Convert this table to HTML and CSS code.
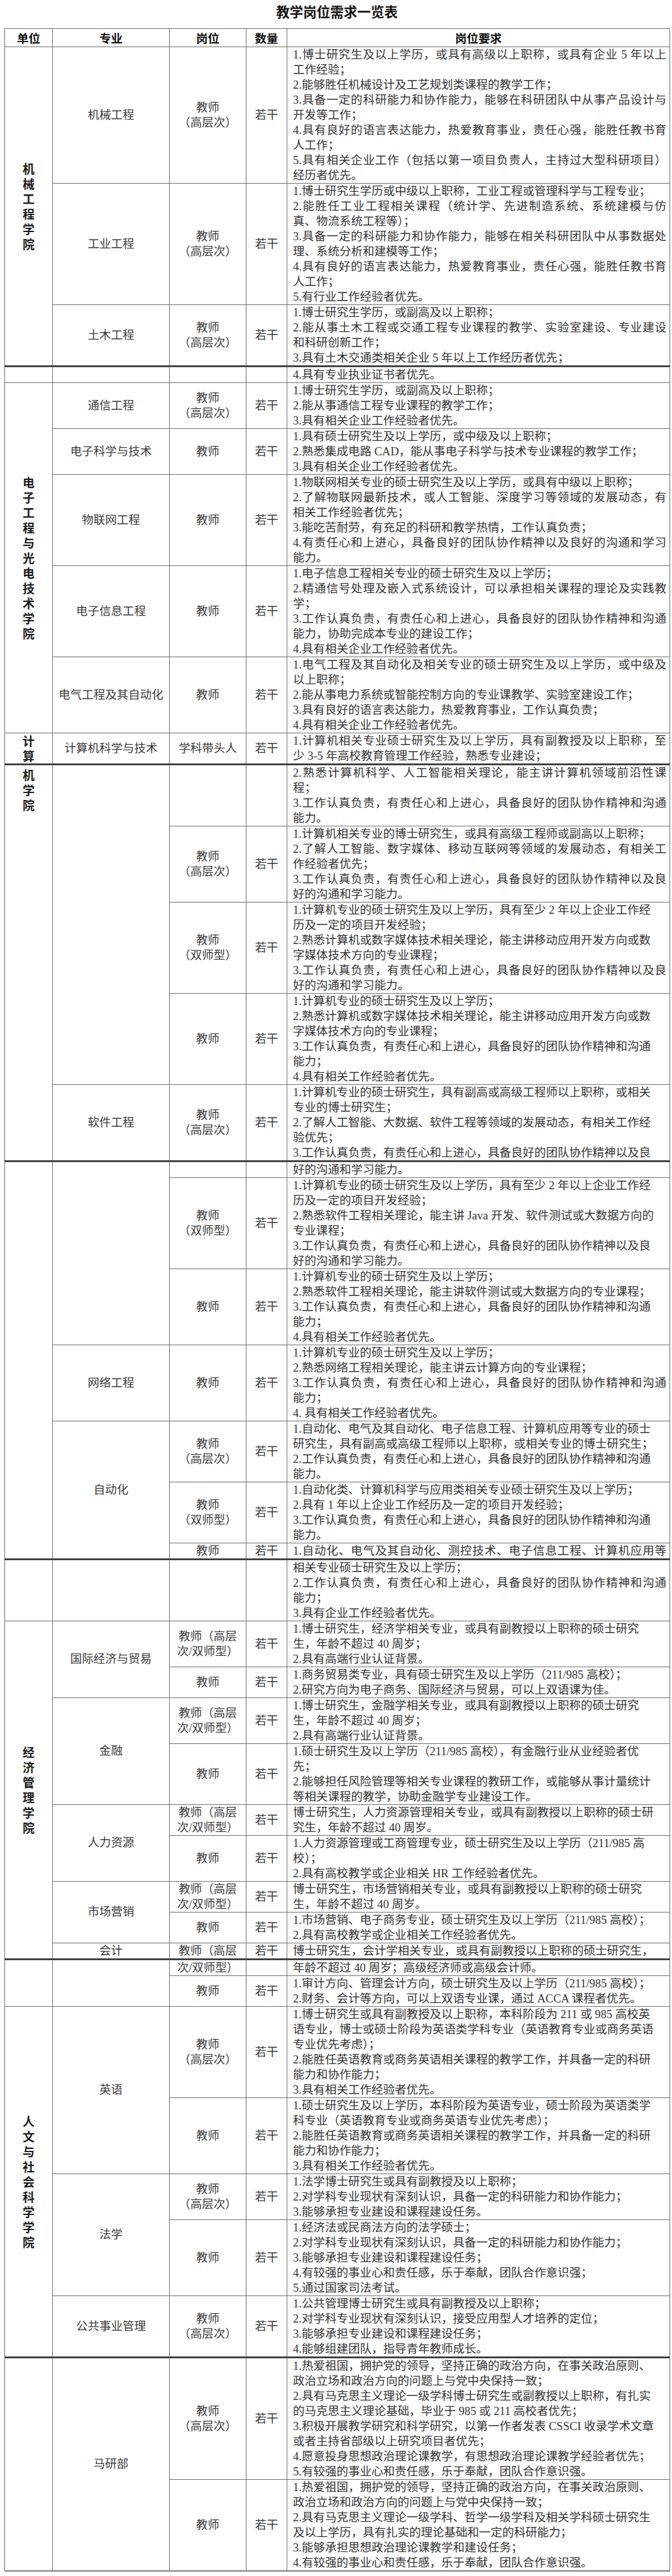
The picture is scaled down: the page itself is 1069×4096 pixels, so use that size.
FILE: index.html
```html
<!DOCTYPE html>
<html lang="zh-CN">
<head>
<meta charset="utf-8">
<title>教学岗位需求一览表</title>
<link rel="stylesheet" href="styles.css">
</head>
<body>
<div class="doc">
<div class="title">教学岗位需求一览表</div>

<table class="seg brk">
<colgroup><col class="c1"><col class="c2"><col class="c3"><col class="c4"><col class="c5"></colgroup>
<tr class="hd"><th>单位</th><th>专业</th><th>岗位</th><th>数量</th><th>岗位要求</th></tr>
<tr>
<td class="u" rowspan="3"><span class="vt">机械工程学院</span></td>
<td class="m">机械工程</td><td class="p">教师<br>（高层次）</td><td class="n">若干</td>
<td class="r"><div class="j">1.博士研究生及以上学历，或具有高级以上职称，或具有企业 5 年以上</div><div>工作经验；</div><div>2.能够胜任机械设计及工艺规划类课程的教学工作；</div><div class="j">3.具备一定的科研能力和协作能力，能够在科研团队中从事产品设计与</div><div>开发等工作；</div><div class="j">4.具有良好的语言表达能力，热爱教育事业，责任心强，能胜任教书育</div><div>人工作；</div><div class="j">5.具有相关企业工作（包括以第一项目负责人，主持过大型科研项目）</div><div>经历者优先。</div></td>
</tr>
<tr>
<td class="m">工业工程</td><td class="p">教师<br>（高层次）</td><td class="n">若干</td>
<td class="r"><div>1.博士研究生学历或中级以上职称，工业工程或管理科学与工程专业；</div><div class="j">2.能胜任工业工程相关课程（统计学、先进制造系统、系统建模与仿</div><div>真、物流系统工程等）；</div><div class="j">3.具备一定的科研能力和协作能力，能够在相关科研团队中从事数据处</div><div>理、系统分析和建模等工作；</div><div class="j">4.具有良好的语言表达能力，热爱教育事业，责任心强，能胜任教书育</div><div>人工作；</div><div>5.有行业工作经验者优先。</div></td>
</tr>
<tr>
<td class="m">土木工程</td><td class="p">教师<br>（高层次）</td><td class="n">若干</td>
<td class="r"><div>1.博士研究生学历，或副高及以上职称；</div><div class="j">2.能从事土木工程或交通工程专业课程的教学、实验室建设、专业建设</div><div>和科研创新工作；</div><div>3.具有土木交通类相关企业 5 年以上工作经历者优先；</div></td>
</tr>
</table>

<table class="seg brk">
<colgroup><col class="c1"><col class="c2"><col class="c3"><col class="c4"><col class="c5"></colgroup>
<tr><td class="u"></td><td class="m"></td><td class="p"></td><td class="n"></td><td class="r"><div>4.具有专业执业证书者优先。</div></td></tr>
<tr>
<td class="u" rowspan="5"><span class="vt">电子工程与光电技术学院</span></td>
<td class="m">通信工程</td><td class="p">教师<br>（高层次）</td><td class="n">若干</td>
<td class="r"><div>1.博士研究生学历，或副高及以上职称；</div><div>2.能从事通信工程专业课程的教学工作；</div><div>3.具有相关企业工作经验者优先。</div></td>
</tr>
<tr>
<td class="m">电子科学与技术</td><td class="p">教师</td><td class="n">若干</td>
<td class="r"><div>1.具有硕士研究生及以上学历，或中级及以上职称；</div><div>2.熟悉集成电路 CAD，能从事电子科学与技术专业课程的教学工作；</div><div>3.具有相关企业工作经验者优先。</div></td>
</tr>
<tr>
<td class="m">物联网工程</td><td class="p">教师</td><td class="n">若干</td>
<td class="r"><div>1.物联网相关专业的硕士研究生及以上学历，或具有中级以上职称；</div><div class="j">2.了解物联网最新技术，或人工智能、深度学习等领域的发展动态，有</div><div>相关工作经验者优先；</div><div>3.能吃苦耐劳，有充足的科研和教学热情，工作认真负责；</div><div class="j">4.有责任心和上进心，具备良好的团队协作精神以及良好的沟通和学习</div><div>能力。</div></td>
</tr>
<tr>
<td class="m">电子信息工程</td><td class="p">教师</td><td class="n">若干</td>
<td class="r"><div>1.电子信息工程相关专业的硕士研究生及以上学历；</div><div class="j">2.精通信号处理及嵌入式系统设计，可以承担相关课程的理论及实践教</div><div>学；</div><div class="j">3.工作认真负责，有责任心和上进心，具备良好的团队协作精神和沟通</div><div>能力，协助完成本专业的建设工作；</div><div>4.具有相关企业工作经验者优先。</div></td>
</tr>
<tr>
<td class="m">电气工程及其自动化</td><td class="p">教师</td><td class="n">若干</td>
<td class="r"><div class="j">1.电气工程及其自动化及相关专业的硕士研究生及以上学历，或中级及</div><div>以上职称；</div><div>2.能从事电力系统或智能控制方向的专业课教学、实验室建设工作；</div><div>3.具有良好的语言表达能力，热爱教育事业，工作认真负责；</div><div>4.具有相关企业工作经验者优先。</div></td>
</tr>
<tr>
<td class="u"><span class="vt">计算</span></td>
<td class="m">计算机科学与技术</td><td class="p">学科带头人</td><td class="n">若干</td>
<td class="r"><div class="j">1.计算机相关专业硕士研究生及以上学历，具有副教授及以上职称，至</div><div>少 3-5 年高校教育管理工作经验，熟悉专业建设；</div></td>
</tr>
</table>

<table class="seg brk">
<colgroup><col class="c1"><col class="c2"><col class="c3"><col class="c4"><col class="c5"></colgroup>
<tr>
<td class="u top" rowspan="5"><span class="vt">机学院</span></td>
<td class="m" rowspan="4"></td><td class="p"></td><td class="n"></td>
<td class="r"><div class="j">2.熟悉计算机科学、人工智能相关理论，能主讲计算机领域前沿性课</div><div>程；</div><div class="j">3.工作认真负责，有责任心和上进心，具备良好的团队协作精神和沟通</div><div>能力。</div></td>
</tr>
<tr>
<td class="p">教师<br>（高层次）</td><td class="n">若干</td>
<td class="r"><div>1.计算机相关专业的博士研究生，或具有高级工程师或副高以上职称；</div><div class="j">2.了解人工智能、数字媒体、移动互联网等领域的发展动态，有相关工</div><div>作经验者优先；</div><div class="j">3.工作认真负责，有责任心和上进心，具备良好的团队协作精神以及良</div><div>好的沟通和学习能力。</div></td>
</tr>
<tr>
<td class="p">教师<br>（双师型）</td><td class="n">若干</td>
<td class="r"><div>1.计算机专业的硕士研究生及以上学历，具有至少 2 年以上企业工作经</div><div>历及一定的项目开发经验；</div><div>2.熟悉计算机或数字媒体技术相关理论，能主讲移动应用开发方向或数</div><div>字媒体技术方向的专业课程；</div><div class="j">3.工作认真负责，有责任心和上进心，具备良好的团队协作精神以及良</div><div>好的沟通和学习能力。</div></td>
</tr>
<tr>
<td class="p">教师</td><td class="n">若干</td>
<td class="r"><div>1.计算机专业的硕士研究生及以上学历；</div><div>2.熟悉计算机或数字媒体技术相关理论，能主讲移动应用开发方向或数</div><div>字媒体技术方向的专业课程；</div><div>3.工作认真负责，有责任心和上进心，具备良好的团队协作精神和沟通</div><div>能力；</div><div>4.具有相关工作经验者优先。</div></td>
</tr>
<tr>
<td class="m">软件工程</td><td class="p">教师<br>（高层次）</td><td class="n">若干</td>
<td class="r"><div>1.计算机专业的硕士研究生，具有副高或高级工程师以上职称，或相关</div><div>专业的博士研究生；</div><div>2.了解人工智能、大数据、软件工程等领域的发展动态，有相关工作经</div><div>验优先；</div><div>3.工作认真负责，有责任心和上进心，具备良好的团队协作精神以及良</div></td>
</tr>
</table>

<table class="seg brk">
<colgroup><col class="c1"><col class="c2"><col class="c3"><col class="c4"><col class="c5"></colgroup>
<tr>
<td class="u" rowspan="7"></td>
<td class="m" rowspan="3"></td><td class="p"></td><td class="n"></td>
<td class="r"><div>好的沟通和学习能力。</div></td>
</tr>
<tr>
<td class="p">教师<br>（双师型）</td><td class="n">若干</td>
<td class="r"><div>1.计算机专业的硕士研究生及以上学历，具有至少 2 年以上企业工作经</div><div>历及一定的项目开发经验；</div><div>2.熟悉软件工程相关理论，能主讲 Java 开发、软件测试或大数据方向的</div><div>专业课程；</div><div>3.工作认真负责，有责任心和上进心，具备良好的团队协作精神以及良</div><div>好的沟通和学习能力。</div></td>
</tr>
<tr>
<td class="p">教师</td><td class="n">若干</td>
<td class="r"><div>1.计算机专业的硕士研究生及以上学历；</div><div>2.熟悉软件工程相关理论，能主讲软件测试或大数据方向的专业课程；</div><div>3.工作认真负责，有责任心和上进心，具备良好的团队协作精神和沟通</div><div>能力；</div><div>4.具有相关工作经验者优先。</div></td>
</tr>
<tr>
<td class="m">网络工程</td><td class="p">教师</td><td class="n">若干</td>
<td class="r"><div>1.计算机专业的硕士研究生及以上学历；</div><div>2.熟悉网络工程相关理论，能主讲云计算方向的专业课程；</div><div class="j">3.工作认真负责，有责任心和上进心，具备良好的团队协作精神和沟通</div><div>能力；</div><div>4. 具有相关工作经验者优先。</div></td>
</tr>
<tr>
<td class="m" rowspan="3">自动化</td><td class="p">教师<br>（高层次）</td><td class="n">若干</td>
<td class="r"><div>1.自动化、电气及其自动化、电子信息工程、计算机应用等专业的硕士</div><div>研究生，具有副高或高级工程师以上职称，或相关专业的博士研究生；</div><div>2.工作认真负责，有责任心和上进心，具备良好的团队协作精神和沟通</div><div>能力。</div></td>
</tr>
<tr>
<td class="p">教师<br>（双师型）</td><td class="n">若干</td>
<td class="r"><div>1.自动化类、计算机科学与应用类相关专业硕士研究生及以上学历；</div><div>2.具有 1 年以上企业工作经历及一定的项目开发经验；</div><div>3.工作认真负责，有责任心和上进心，具备良好的团队协作精神和沟通</div><div>能力。</div></td>
</tr>
<tr>
<td class="p">教师</td><td class="n">若干</td>
<td class="r"><div class="j">1.自动化、电气及其自动化、测控技术、电子信息工程、计算机应用等</div></td>
</tr>
</table>

<table class="seg brk">
<colgroup><col class="c1"><col class="c2"><col class="c3"><col class="c4"><col class="c5"></colgroup>
<tr>
<td class="u"></td><td class="m"></td><td class="p"></td><td class="n"></td>
<td class="r"><div>相关专业硕士研究生及以上学历；</div><div class="j">2.工作认真负责，有责任心和上进心，具备良好的团队协作精神和沟通</div><div>能力；</div><div>3.具有企业工作经验者优先。</div></td>
</tr>
<tr>
<td class="u" rowspan="9"><span class="vt">经济管理学院</span></td>
<td class="m" rowspan="2">国际经济与贸易</td><td class="p">教师（高层<br>次/双师型）</td><td class="n">若干</td>
<td class="r"><div>1.博士研究生，经济学相关专业，或具有副教授以上职称的硕士研究</div><div>生，年龄不超过 40 周岁；</div><div>2.具有高端行业认证背景。</div></td>
</tr>
<tr>
<td class="p">教师</td><td class="n">若干</td>
<td class="r"><div>1.商务贸易类专业，具有硕士研究生及以上学历（211/985 高校）；</div><div>2.研究方向为电子商务、国际经济与贸易，可以上双语课为佳。</div></td>
</tr>
<tr>
<td class="m" rowspan="2">金融</td><td class="p">教师（高层<br>次/双师型）</td><td class="n">若干</td>
<td class="r"><div>1.博士研究生，金融学相关专业，或具有副教授以上职称的硕士研究</div><div>生，年龄不超过 40 周岁；</div><div>2.具有高端行业认证背景。</div></td>
</tr>
<tr>
<td class="p">教师</td><td class="n">若干</td>
<td class="r"><div>1.硕士研究生及以上学历（211/985 高校），有金融行业从业经验者优</div><div>先；</div><div>2.能够担任风险管理等相关专业课程的教研工作，或能够从事计量统计</div><div>等相关课程的教学，协助金融学专业建设工作。</div></td>
</tr>
<tr>
<td class="m" rowspan="2">人力资源</td><td class="p">教师（高层<br>次/双师型）</td><td class="n">若干</td>
<td class="r"><div>博士研究生，人力资源管理相关专业，或具有副教授以上职称的硕士研</div><div>究生，年龄不超过 40 周岁。</div></td>
</tr>
<tr>
<td class="p">教师</td><td class="n">若干</td>
<td class="r"><div>1.人力资源管理或工商管理专业，硕士研究生及以上学历（211/985 高</div><div>校）；</div><div>2.具有高校教学或企业相关 HR 工作经验者优先。</div></td>
</tr>
<tr>
<td class="m" rowspan="2">市场营销</td><td class="p">教师（高层<br>次/双师型）</td><td class="n">若干</td>
<td class="r"><div>博士研究生，市场营销相关专业，或具有副教授以上职称的硕士研究</div><div>生，年龄不超过 40 周岁。</div></td>
</tr>
<tr>
<td class="p">教师</td><td class="n">若干</td>
<td class="r"><div>1.市场营销、电子商务专业，硕士研究生及以上学历（211/985 高校）；</div><div>2.具有高校教学或企业相关工作经验者优先。</div></td>
</tr>
<tr>
<td class="m">会计</td><td class="p">教师（高层</td><td class="n">若干</td>
<td class="r"><div>博士研究生，会计学相关专业，或具有副教授以上职称的硕士研究生，</div></td>
</tr>
</table>

<table class="seg brk">
<colgroup><col class="c1"><col class="c2"><col class="c3"><col class="c4"><col class="c5"></colgroup>
<tr>
<td class="u" rowspan="2"></td><td class="m" rowspan="2"></td><td class="p">次/双师型）</td><td class="n"></td>
<td class="r"><div>年龄不超过 40 周岁；高级经济师或高级会计师。</div></td>
</tr>
<tr>
<td class="p">教师</td><td class="n">若干</td>
<td class="r"><div>1.审计方向、管理会计方向，硕士研究生及以上学历（211/985 高校）；</div><div>2.财务、会计等方向，可以上双语专业课，通过 ACCA 课程者优先。</div></td>
</tr>
<tr>
<td class="u" rowspan="5"><span class="vt">人文与社会科学学院</span></td>
<td class="m" rowspan="2">英语</td><td class="p">教师<br>（高层次）</td><td class="n">若干</td>
<td class="r"><div>1.博士研究生或具有副教授及以上职称，本科阶段为 211 或 985 高校英</div><div>语专业，博士或硕士阶段为英语类学科专业（英语教育专业或商务英语</div><div>专业优先考虑）；</div><div>2.能胜任英语教育或商务英语相关课程的教学工作，并具备一定的科研</div><div>能力和协作能力；</div><div>3.具有相关工作经验者优先。</div></td>
</tr>
<tr>
<td class="p">教师</td><td class="n">若干</td>
<td class="r"><div>1.硕士研究生及以上学历，本科阶段为英语专业，硕士阶段为英语类学</div><div>科专业（英语教育专业或商务英语专业优先考虑）；</div><div>2.能胜任英语教育或商务英语相关课程的教学工作，并具备一定的科研</div><div>能力和协作能力；</div><div>3.具有相关工作经验者优先。</div></td>
</tr>
<tr>
<td class="m" rowspan="2">法学</td><td class="p">教师<br>（高层次）</td><td class="n">若干</td>
<td class="r"><div>1.法学博士研究生或具有副教授及以上职称；</div><div>2.对学科专业现状有深刻认识，具备一定的科研能力和协作能力；</div><div>3.能够承担专业建设和课程建设任务。</div></td>
</tr>
<tr>
<td class="p">教师</td><td class="n">若干</td>
<td class="r"><div>1.经济法或民商法方向的法学硕士；</div><div>2.对学科专业现状有深刻认识，具备一定的科研能力和协作能力；</div><div>3.能够承担专业建设和课程建设任务；</div><div>4.有较强的事业心和责任感，乐于奉献，团队合作意识强；</div><div>5.通过国家司法考试。</div></td>
</tr>
<tr>
<td class="m">公共事业管理</td><td class="p">教师<br>（高层次）</td><td class="n">若干</td>
<td class="r"><div>1.公共管理博士研究生或具有副教授及以上职称；</div><div>2.对学科专业现状有深刻认识，接受应用型人才培养的定位；</div><div>3.能够承担专业建设和课程建设任务；</div><div>4.能够组建团队，指导青年教师成长。</div></td>
</tr>
</table>

<table class="seg last">
<colgroup><col class="c1"><col class="c2"><col class="c3"><col class="c4"><col class="c5"></colgroup>
<tr>
<td class="u" rowspan="2"></td><td class="m" rowspan="2">马研部</td><td class="p">教师<br>（高层次）</td><td class="n">若干</td>
<td class="r"><div>1.热爱祖国，拥护党的领导，坚持正确的政治方向，在事关政治原则、</div><div>政治立场和政治方向的问题上与党中央保持一致；</div><div>2.具有马克思主义理论一级学科博士研究生或副教授以上职称，有扎实</div><div>的马克思主义理论基础，毕业于 985 或 211 高校者优先；</div><div>3.积极开展教学研究和科学研究，以第一作者发表 CSSCI 收录学术文章</div><div>或者主持省部级以上研究项目者优先；</div><div>4.愿意投身思想政治理论课教学，有思想政治理论课教学经验者优先；</div><div>5.有较强的事业心和责任感，乐于奉献，团队合作意识强。</div></td>
</tr>
<tr>
<td class="p">教师</td><td class="n">若干</td>
<td class="r"><div>1.热爱祖国，拥护党的领导，坚持正确的政治方向，在事关政治原则、</div><div>政治立场和政治方向的问题上与党中央保持一致；</div><div>2.具有马克思主义理论一级学科、哲学一级学科及相关学科硕士研究生</div><div>及以上学历，具有扎实的理论基础和一定的科研能力；</div><div>3.能够承担思想政治理论课教学和建设任务；</div><div>4.有较强的事业心和责任感，乐于奉献，团队合作意识强。</div></td>
</tr>
</table>
</div>
</body>
</html>
```

FILE: styles.css
```css
html, body {
  margin: 0;
  padding: 0;
  background: #ffffff;
}
body {
  color: #333333;
  font-family: "Liberation Serif", "Noto Sans CJK SC", serif;
  font-size: 18.5px;
}
.doc {
  width: 1058px;
  margin-left: 7px;
}
.title {
  text-align: center;
  font-family: "Noto Sans CJK SC", sans-serif;
  font-weight: 700;
  font-size: 21.5px;
  height: 35px;
  line-height: 35px;
  margin-bottom: 9.5px;
  color: #111111;
}
.seg {
  width: 1058px;
  table-layout: fixed;
  border-collapse: collapse;
  border: 1px solid #555555;
}
.seg.brk {
  border-bottom: 2px solid #2e2e2e;
}
.seg.last {
  border-bottom: 2px solid #7a7a7a;
}
.c1 { width: 76px; }
.c2 { width: 186px; }
.c3 { width: 122px; }
.c4 { width: 65px; }
.c5 { width: 609px; }
.seg td,
.seg th {
  border: 1px solid #6e6e6e;
  padding: 0;
  text-align: center;
  vertical-align: middle;
  line-height: 24px;
}
.hd th {
  height: 28px;
  line-height: 28px;
  font-family: "Noto Sans CJK SC", sans-serif;
  font-weight: 700;
  font-size: 18.5px;
  color: #111111;
}
.u {
  font-family: "Noto Sans CJK SC", sans-serif;
  font-weight: 700;
  font-size: 19px;
  color: #1a1a1a;
}
.u.top {
  vertical-align: top;
  padding-top: 3px;
}
.vt {
  display: inline-block;
  width: 1em;
  word-break: break-all;
  line-height: 24px;
}
.m,
.p,
.n {
  color: #3a3a3a;
}
.r {
  text-align: left;
}
.seg td.r {
  text-align: left;
  padding: 0 5px 0 9px;
}
.r div {
  height: 24px;
  line-height: 24px;
  white-space: nowrap;
}
.r div.j {
  white-space: normal;
  text-align: justify;
  text-align-last: justify;
}
```
